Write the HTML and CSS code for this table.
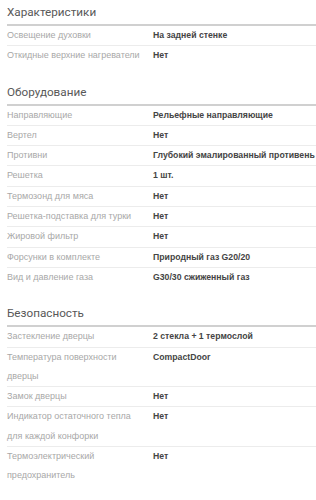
FILE: index.html
```html
<!DOCTYPE html>
<html lang="ru">
<head>
<meta charset="utf-8">
<title>Характеристики</title>
<link rel="stylesheet" href="styles.css">
</head>
<body>
<div class="specs">
  <section class="spec-group">
    <h2 class="spec-title">Характеристики</h2>
    <div class="spec-row"><div class="spec-label">Освещение духовки</div><div class="spec-value">На задней стенке</div></div>
    <div class="spec-row"><div class="spec-label">Откидные верхние нагреватели</div><div class="spec-value">Нет</div></div>
  </section>

  <section class="spec-group">
    <h2 class="spec-title">Оборудование</h2>
    <div class="spec-row"><div class="spec-label">Направляющие</div><div class="spec-value">Рельефные направляющие</div></div>
    <div class="spec-row"><div class="spec-label">Вертел</div><div class="spec-value">Нет</div></div>
    <div class="spec-row"><div class="spec-label">Противни</div><div class="spec-value">Глубокий эмалированный противень</div></div>
    <div class="spec-row"><div class="spec-label">Решетка</div><div class="spec-value">1 шт.</div></div>
    <div class="spec-row"><div class="spec-label">Термозонд для мяса</div><div class="spec-value">Нет</div></div>
    <div class="spec-row"><div class="spec-label">Решетка-подставка для турки</div><div class="spec-value">Нет</div></div>
    <div class="spec-row"><div class="spec-label">Жировой фильтр</div><div class="spec-value">Нет</div></div>
    <div class="spec-row"><div class="spec-label">Форсунки в комплекте</div><div class="spec-value">Природный газ G20/20</div></div>
    <div class="spec-row"><div class="spec-label">Вид и давление газа</div><div class="spec-value">G30/30 сжиженный газ</div></div>
  </section>

  <section class="spec-group">
    <h2 class="spec-title">Безопасность</h2>
    <div class="spec-row"><div class="spec-label">Застекление дверцы</div><div class="spec-value">2 стекла + 1 термослой</div></div>
    <div class="spec-row"><div class="spec-label">Температура поверхности дверцы</div><div class="spec-value">CompactDoor</div></div>
    <div class="spec-row"><div class="spec-label">Замок дверцы</div><div class="spec-value">Нет</div></div>
    <div class="spec-row"><div class="spec-label">Индикатор остаточного тепла для каждой конфорки</div><div class="spec-value">Нет</div></div>
    <div class="spec-row"><div class="spec-label">Термоэлектрический предохранитель</div><div class="spec-value">Нет</div></div>
  </section>
</div>
</body>
</html>
```

FILE: styles.css
```css
html, body {
  margin: 0;
  padding: 0;
  background: #fff;
}

body {
  font-family: "Liberation Sans", Arial, sans-serif;
  font-size: 9px;
}

.specs {
  padding-left: 7px;
}

.spec-group + .spec-group {
  margin-top: 14px;
}

.spec-title {
  margin: 0;
  height: 24px;
  line-height: 25px;
  font-family: Roboto, "Liberation Sans", sans-serif;
  font-size: 11.7px;
  font-weight: 400;
  color: #585858;
  border-bottom: 2px solid #d0d0d0;
}

.spec-row {
  display: flex;
  line-height: 19.3px;
  border-bottom: 1px solid #ececec;
}

.spec-row:last-child {
  border-bottom: none;
}

.spec-label {
  flex: 0 0 146px;
  box-sizing: border-box;
  padding-right: 12px;
  color: #a8a8a8;
}

.spec-value {
  flex: 1;
  font-size: 8.7px;
  font-weight: 700;
  color: #444;
}
```
